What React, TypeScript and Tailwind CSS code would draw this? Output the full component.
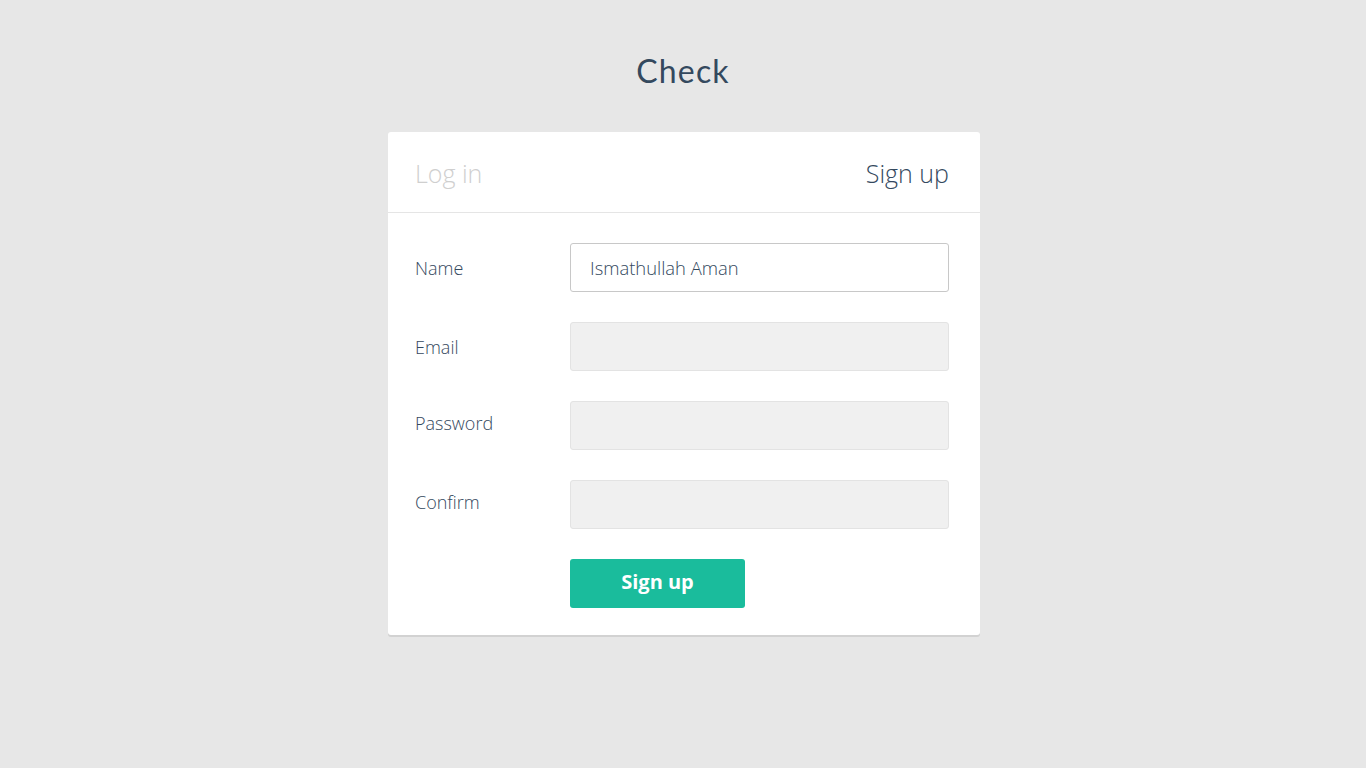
import React from "react";

const fields = [
  { label: "Name", value: "Ismathullah Aman", active: true, shift: "translate-y-[1px]" },
  { label: "Email", value: "", active: false, shift: "translate-y-[1px]" },
  { label: "Password", value: "", active: false, shift: "-translate-y-[2px]" },
  { label: "Confirm", value: "", active: false, shift: "-translate-y-[2px]" },
];

export default function App() {
  return (
    <div
      className="min-h-screen w-full bg-[#e7e7e7] flex flex-col items-center"
      style={{ fontFamily: '"Open Sans", "Liberation Sans", sans-serif' }}
    >
      <h1
        className="mt-[51px] text-[32px] leading-[40px] font-normal text-[#34495e] tracking-[1.2px]"
        style={{ fontFamily: 'Lato, "Open Sans", sans-serif' }}
      >
        Check
      </h1>
      <div className="mt-[41px] w-[592px] translate-x-[1px] bg-white rounded-[3px] shadow-[0_2px_0_#d2d2d2]">
        <div className="h-[81px] px-[27px] pr-[31px] flex items-center justify-between border-b border-[#e5e5e5]">
          <span className="text-[25px] font-light text-[#cfcfcf] mt-[3px]">Log in</span>
          <span className="text-[25px] font-light text-[#34495e] mt-[3px]">Sign up</span>
        </div>
        <div className="pl-[27px] pr-[31px] pt-[30px] pb-[27px] flex flex-col gap-[30px]">
          {fields.map((f) => (
            <div key={f.label} className="flex items-center">
              <label className={"w-[155px] text-[18px] font-light text-[#34495e] " + f.shift}>{f.label}</label>
              <div
                className={
                  f.active
                    ? "flex-1 h-[49px] rounded-[3px] border border-[#c8c8c8] bg-white flex items-center px-[19px]"
                    : "flex-1 h-[49px] rounded-[3px] border border-[#e3e3e3] bg-[#f0f0f0] flex items-center px-[19px]"
                }
              >
                <span className="text-[18.4px] font-light text-[#34495e] mt-[1px]">{f.value}</span>
              </div>
            </div>
          ))}
          <div className="flex">
            <div className="w-[155px]" />
            <button className="w-[175px] h-[49px] rounded-[3px] bg-[#1abc9c] text-white text-[20px] font-bold pb-[3px]">
              Sign up
            </button>
          </div>
        </div>
      </div>
    </div>
  );
}
